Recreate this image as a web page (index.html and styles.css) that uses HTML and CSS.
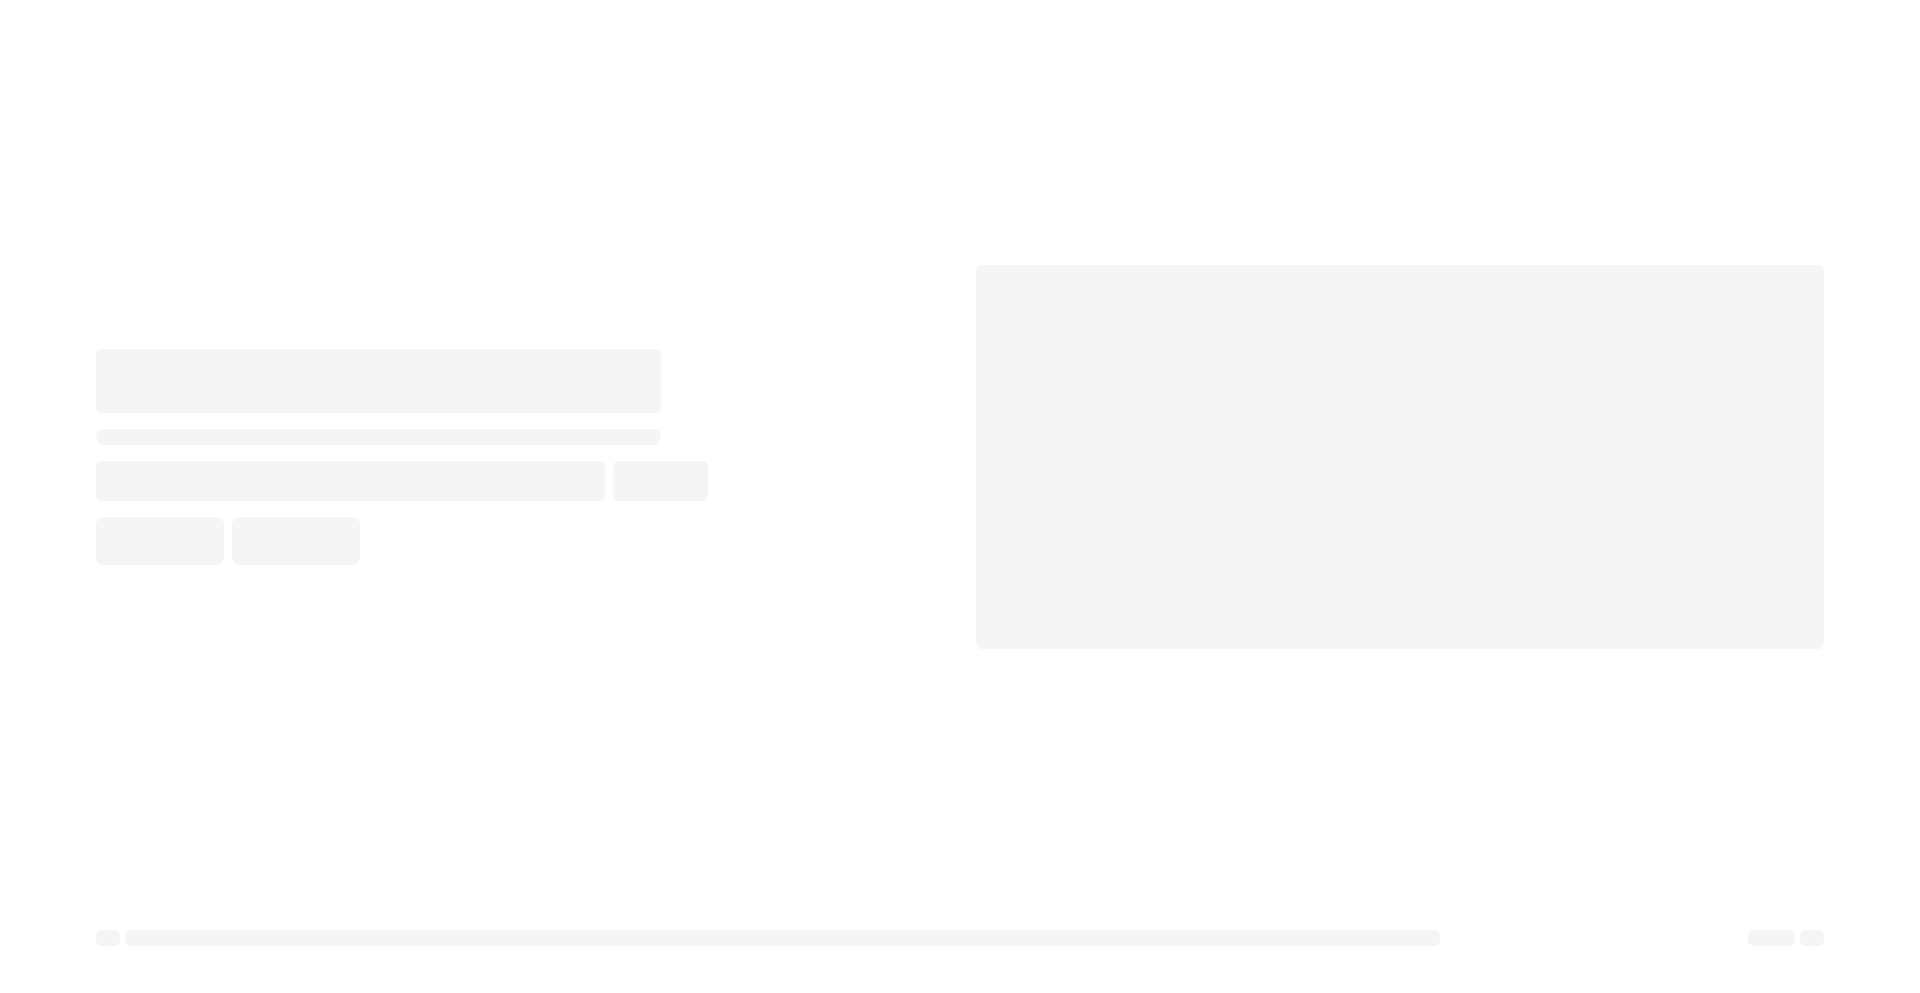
FILE: index.html
```html
<!DOCTYPE html>
<html lang="en">
<head>
<meta charset="utf-8">
<title>Loading</title>
<link rel="stylesheet" href="styles.css">
</head>
<body>
<div class="page">
  <main class="main">
    <section class="hero">
      <div class="hero-left">
        <div class="sk sk-title"></div>
        <div class="sk sk-line"></div>
        <div class="form-row">
          <div class="sk sk-input"></div>
          <div class="sk sk-submit"></div>
        </div>
        <div class="btn-row">
          <div class="sk sk-btn"></div>
          <div class="sk sk-btn"></div>
        </div>
      </div>
      <div class="hero-right">
        <div class="sk sk-media"></div>
      </div>
    </section>
  </main>
  <footer class="footer">
    <div class="footer-left">
      <div class="sk sk-dot"></div>
      <div class="sk sk-bar"></div>
    </div>
    <div class="footer-right">
      <div class="sk sk-pill"></div>
      <div class="sk sk-dot"></div>
    </div>
  </footer>
</div>
</body>
</html>
```
FILE: styles.css
```css
html, body {
  margin: 0;
  padding: 0;
  background: #ffffff;
  font-family: "Liberation Sans", Arial, sans-serif;
}

.page {
  height: 100vh;
  display: flex;
  flex-direction: column;
}

.main {
  flex: 1;
  display: flex;
  align-items: center;
  padding: 0 96px;
}

.hero {
  width: 100%;
  display: grid;
  grid-template-columns: 1fr 1fr;
  gap: 32px;
  align-items: center;
}

.sk {
  background: #f5f5f5;
  border-radius: 6px;
}

.hero-left {
  display: flex;
  flex-direction: column;
  gap: 16px;
}

.sk-title {
  width: 66.667%;
  height: 64px;
}

.sk-line {
  width: 66.667%;
  height: 16px;
  border-radius: 8px;
}

.form-row {
  display: flex;
  gap: 8px;
}

.sk-input {
  width: 509px;
  height: 40px;
}

.sk-submit {
  width: 95px;
  height: 40px;
}

.btn-row {
  display: flex;
  gap: 8px;
}

.sk-btn {
  width: 128px;
  height: 48px;
  border-radius: 8px;
}

.sk-media {
  height: 384px;
}

.footer {
  display: flex;
  justify-content: space-between;
  align-items: center;
  padding: 17px 96px 47px;
}

.footer-left,
.footer-right {
  display: flex;
  gap: 5px;
  align-items: center;
}

.sk-dot {
  width: 24px;
  height: 16px;
  border-radius: 6px;
}

.sk-bar {
  width: 1315px;
  height: 16px;
  border-radius: 6px;
}

.sk-pill {
  width: 47px;
  height: 16px;
  border-radius: 6px;
}
```
